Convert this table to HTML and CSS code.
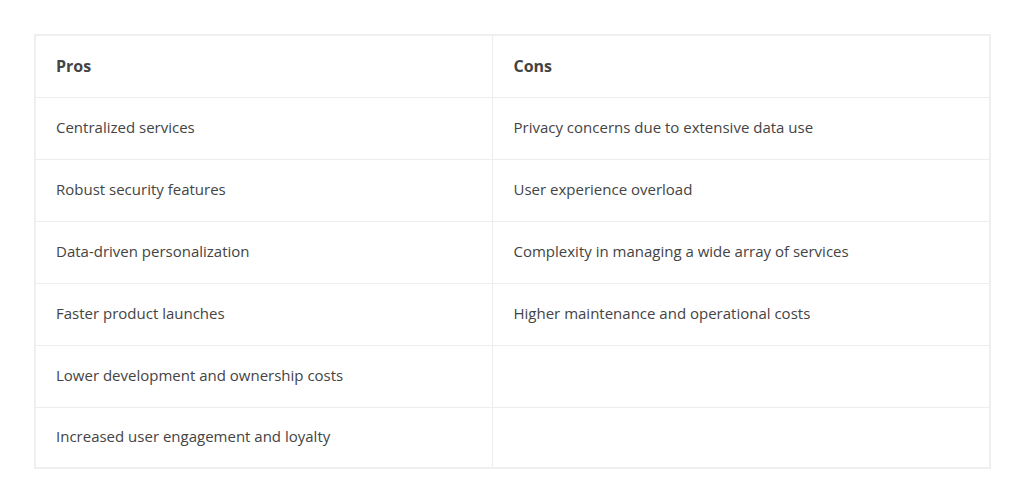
FILE: index.html
```html
<!DOCTYPE html>
<html>
<head>
<meta charset="utf-8">
<link rel="stylesheet" href="styles.css">
</head>
<body>
<div class="wrap">
<table class="pc">
<thead>
<tr><th class="col-l">Pros</th><th class="col-r">Cons</th></tr>
</thead>
<tbody>
<tr><td>Centralized services</td><td class="col-r">Privacy concerns due to extensive data use</td></tr>
<tr><td>Robust security features</td><td class="col-r">User experience overload</td></tr>
<tr><td>Data-driven personalization</td><td class="col-r">Complexity in managing a wide array of services</td></tr>
<tr><td>Faster product launches</td><td class="col-r">Higher maintenance and operational costs</td></tr>
<tr><td>Lower development and ownership costs</td><td class="col-r"></td></tr>
<tr><td>Increased user engagement and loyalty</td><td class="col-r"></td></tr>
</tbody>
</table>
</div>
</body>
</html>
```
FILE: styles.css
```css
html, body { margin: 0; padding: 0; background: #fff; }
.wrap { padding: 34px 33px 0 34px; }
.pc {
  width: 957px;
  border-collapse: collapse;
  font-family: "Open Sans", "Liberation Sans", sans-serif;
  font-size: 15px;
  color: #444;
  table-layout: fixed;
  border: 2px solid #efefef;
}
.pc th, .pc td {
  height: 62px;
  padding: 0 0 3px 20px;
  text-align: left;
  border: 1px solid #ededed;
  box-sizing: border-box;
  vertical-align: middle;
}
.pc th { font-weight: 700; font-size: 16px; color: #444; padding-bottom: 1px; }
.pc .col-r { padding-left: 21px; }
.pc tbody tr:last-child td { height: 61px; }
.pc .col-l { width: 457px; }
```
